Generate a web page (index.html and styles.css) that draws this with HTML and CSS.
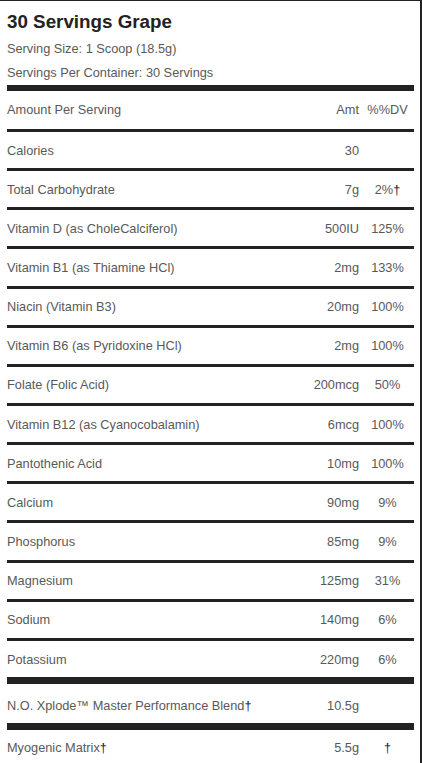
FILE: index.html
```html
<!DOCTYPE html>
<html>
<head>
<meta charset="utf-8">
<link rel="stylesheet" href="styles.css">
</head>
<body>
<div class="panel">
  <h1 class="title">30 Servings Grape</h1>
  <p class="meta">Serving Size: 1 Scoop (18.5g)</p>
  <p class="meta">Servings Per Container: 30 Servings</p>
  <div class="rule-thick"></div>
  <div class="row row-head">
    <span class="name">Amount Per Serving</span><span class="amt">Amt</span><span class="dv">%%DV</span>
  </div>
  <div class="row"><span class="name">Calories</span><span class="amt">30</span><span class="dv"></span></div>
  <div class="row"><span class="name">Total Carbohydrate</span><span class="amt">7g</span><span class="dv">2%<span class="dag">†</span></span></div>
  <div class="row"><span class="name">Vitamin D (as CholeCalciferol)</span><span class="amt">500IU</span><span class="dv">125%</span></div>
  <div class="row"><span class="name">Vitamin B1 (as Thiamine HCl)</span><span class="amt">2mg</span><span class="dv">133%</span></div>
  <div class="row"><span class="name">Niacin (Vitamin B3)</span><span class="amt">20mg</span><span class="dv">100%</span></div>
  <div class="row"><span class="name">Vitamin B6 (as Pyridoxine HCl)</span><span class="amt">2mg</span><span class="dv">100%</span></div>
  <div class="row"><span class="name">Folate (Folic Acid)</span><span class="amt">200mcg</span><span class="dv">50%</span></div>
  <div class="row"><span class="name">Vitamin B12 (as Cyanocobalamin)</span><span class="amt">6mcg</span><span class="dv">100%</span></div>
  <div class="row"><span class="name">Pantothenic Acid</span><span class="amt">10mg</span><span class="dv">100%</span></div>
  <div class="row"><span class="name">Calcium</span><span class="amt">90mg</span><span class="dv">9%</span></div>
  <div class="row"><span class="name">Phosphorus</span><span class="amt">85mg</span><span class="dv">9%</span></div>
  <div class="row"><span class="name">Magnesium</span><span class="amt">125mg</span><span class="dv">31%</span></div>
  <div class="row"><span class="name">Sodium</span><span class="amt">140mg</span><span class="dv">6%</span></div>
  <div class="row row-open row-pot"><span class="name">Potassium</span><span class="amt">220mg</span><span class="dv">6%</span></div>
  <div class="rule-thick rule-bottom"></div>
  <div class="row row-open row-blend"><span class="name">N.O. Xplode™ Master Performance Blend<span class="dag">†</span></span><span class="amt">10.5g</span><span class="dv"></span></div>
  <div class="rule-thick rule-bottom"></div>
  <div class="row row-open row-end"><span class="name">Myogenic Matrix<span class="dag">†</span></span><span class="amt">5.5g</span><span class="dv"><span class="dag">†</span></span></div>
</div>
</body>
</html>
```
FILE: styles.css
```css
html, body {
  margin: 0;
  padding: 0;
  background: #fff;
}
body {
  font-family: "Liberation Sans", Arial, sans-serif;
  color: #595959;
  width: 422px;
  height: 763px;
  overflow: hidden;
}
.panel {
  box-sizing: border-box;
  width: 422px;
  min-height: 763px;
  border-top: 1px solid #222;
  border-right: 2px solid #222;
  padding: 0 6px 0 7px;
}
.title {
  margin: 0;
  font-size: 18.8px;
  font-weight: bold;
  color: #222;
  line-height: 24px;
  padding-top: 9px;
  height: 24px;
}
.meta {
  margin: 0;
  font-size: 12.75px;
  line-height: 24px;
  height: 24px;
}
.title + .meta {
  margin-top: 3px;
}
.rule-thick {
  height: 6px;
  background: #222;
}
.rule-bottom {
  height: 7px;
}
.row {
  display: grid;
  grid-template-columns: 1fr auto 53px;
  align-items: center;
  height: 36.15px;
  border-bottom: 3px solid #222;
  font-size: 12.75px;
}
.row-head {
  height: 36px;
  padding-bottom: 2px;
}
.row-open {
  border-bottom: none;
}
.row-pot {
  padding-top: 1px;
  height: 35.5px;
}
.row-blend {
  height: 36px;
  padding-top: 3px;
}
.row-end {
  height: 35px;
}
.amt {
  text-align: right;
  padding-right: 2px;
}
.dv {
  text-align: center;
}
.dag {
  color: #1a1a33;
}
```
